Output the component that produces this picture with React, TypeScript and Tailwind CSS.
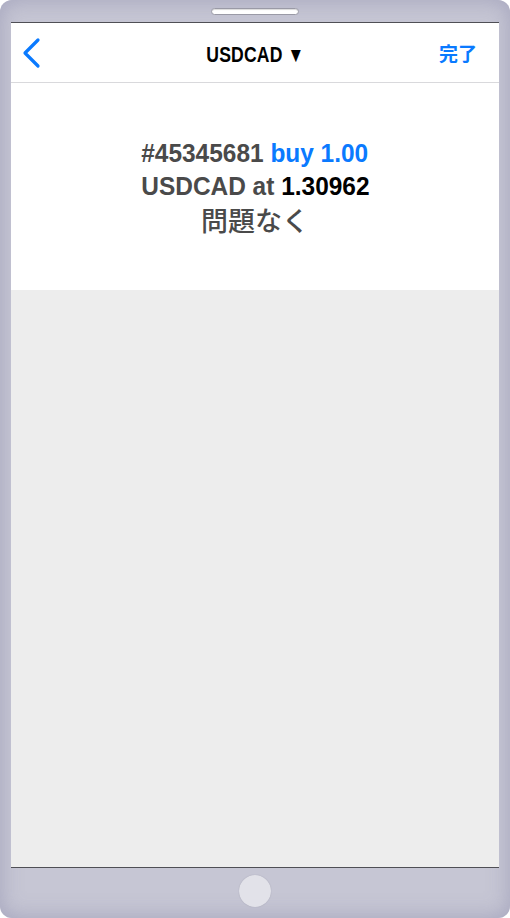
import React from "react";

const sans = "font-['Liberation_Sans',Arial,sans-serif]";
const cjk = "font-['Noto_Sans_CJK_JP','Liberation_Sans',sans-serif]";

function BackChevron() {
  return (
    <svg width="22" height="34" viewBox="0 0 22 34" fill="none">
      <polyline
        points="16,4 3,17 16,30"
        stroke="#0a7aff"
        strokeWidth="3.2"
        strokeLinecap="round"
        strokeLinejoin="round"
      />
    </svg>
  );
}

export default function App() {
  return (
    <div className="w-[510px] h-[918px] overflow-hidden bg-white">
      <div className="w-full h-full flex flex-col px-[11px] rounded-[12px] bg-[#c6c6d4] shadow-[inset_0_0_22px_rgba(160,160,185,0.9)]">
        {/* speaker */}
        <div className="h-[22px] flex items-start justify-center pt-[8px]">
          <div className="w-[88px] h-[7px] rounded-full bg-white border border-[#9a9aa6] shadow-[inset_0_1px_1px_rgba(0,0,0,0.15)]" />
        </div>

        {/* screen */}
        <div className="flex-1 flex flex-col border-t border-b border-[#4f4f55] bg-white">
          <div className="h-[60px] shrink-0 flex items-center border-b border-[#d9d9dc] relative">
            <div className="pl-[11px] pt-[1px]">
              <BackChevron />
            </div>
            <div className="absolute inset-0 flex items-center justify-center pt-[4px] pointer-events-none">
              <span className={`${sans} inline-block font-bold text-[22px] text-black scale-x-[0.8] tracking-[0.2px]`}>
                USDCAD <span className="text-[21px]">▼</span>
              </span>
            </div>
            <div className={`ml-auto pr-[22px] pt-[2px] ${cjk} font-bold text-[19px] text-[#0a7aff]`}>
              完了
            </div>
          </div>

          <div className="h-[207px] shrink-0 flex flex-col items-center justify-center bg-white leading-[33px]">
            <div className={`${sans} inline-block font-bold text-[26px] text-[#4a4a4a] scale-x-[0.94]`}>
              #45345681 <span className="text-[#0a7aff]">buy 1.00</span>
            </div>
            <div className={`${sans} inline-block font-bold text-[26px] text-[#4a4a4a] scale-x-[0.94]`}>
              USDCAD at <span className="text-black">1.30962</span>
            </div>
            <div className={`${cjk} font-medium text-[27px] text-[#4a4a4a]`}>問題なく</div>
          </div>

          <div className="flex-1 bg-[#ededed]" />
        </div>

        {/* home button */}
        <div className="h-[50px] shrink-0 flex items-start justify-center pt-[7px]">
          <div className="w-[32px] h-[32px] rounded-full bg-[#e2e2e9] shadow-[0_0_1px_rgba(120,120,140,0.6)]" />
        </div>
      </div>
    </div>
  );
}
